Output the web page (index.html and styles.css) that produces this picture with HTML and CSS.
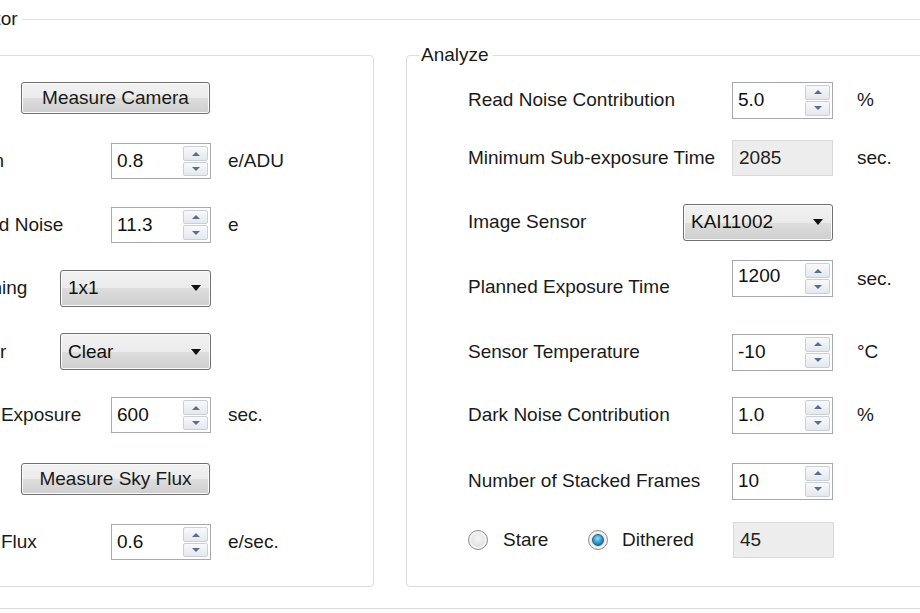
FILE: index.html
```html
<!DOCTYPE html>
<html lang="en">
  <head>
    <meta charset="UTF-8" />
    <title>Sub-exposure Calculator</title>
    <link rel="stylesheet" href="styles.css">
  </head>
  <body>
    <div class="window">
      <fieldset class="calc">
        <legend>Calculator</legend>
        <div class="panels">
          <!-- Camera -->
          <fieldset class="group camera">
            <legend>Camera</legend>
            <div class="rows">
              <div class="row">
                <button class="btn">Measure Camera</button>
              </div>
              <div class="row">
                <span class="lbl">Gain</span>
                <div class="spin"><span>0.8</span><span class="arrows"><i class="up"></i><i class="down"></i></span></div>
                <span class="unit">e/ADU</span>
              </div>
              <div class="row">
                <span class="lbl">Read Noise</span>
                <div class="spin"><span>11.3</span><span class="arrows"><i class="up"></i><i class="down"></i></span></div>
                <span class="unit">e</span>
              </div>
              <div class="row">
                <span class="lbl short">Binning</span>
                <div class="combo"><span>1x1</span></div>
              </div>
              <div class="row">
                <span class="lbl short">Filter</span>
                <div class="combo"><span>Clear</span></div>
              </div>
              <div class="row">
                <span class="lbl">Sky Exposure</span>
                <div class="spin"><span>600</span><span class="arrows"><i class="up"></i><i class="down"></i></span></div>
                <span class="unit">sec.</span>
              </div>
              <div class="row">
                <button class="btn">Measure Sky Flux</button>
              </div>
              <div class="row">
                <span class="lbl">Sky Flux</span>
                <div class="spin"><span>0.6</span><span class="arrows"><i class="up"></i><i class="down"></i></span></div>
                <span class="unit">e/sec.</span>
              </div>
            </div>
          </fieldset>

          <!-- Analyze -->
          <fieldset class="group analyze">
            <legend>Analyze</legend>
            <div class="rows">
              <div class="row">
                <span class="lbl">Read Noise Contribution</span>
                <div class="spin"><span>5.0</span><span class="arrows"><i class="up"></i><i class="down"></i></span></div>
                <span class="unit">%</span>
              </div>
              <div class="row">
                <span class="lbl">Minimum Sub-exposure Time</span>
                <div class="ro">2085</div>
                <span class="unit">sec.</span>
              </div>
              <div class="row">
                <span class="lbl short">Image Sensor</span>
                <div class="combo"><span>KAI11002</span></div>
              </div>
              <div class="row">
                <span class="lbl low">Planned Exposure Time</span>
                <div class="spin"><span class="high">1200</span><span class="arrows"><i class="up"></i><i class="down"></i></span></div>
                <span class="unit">sec.</span>
              </div>
              <div class="row">
                <span class="lbl">Sensor Temperature</span>
                <div class="spin"><span>-10</span><span class="arrows"><i class="up"></i><i class="down"></i></span></div>
                <span class="unit">°C</span>
              </div>
              <div class="row">
                <span class="lbl">Dark Noise Contribution</span>
                <div class="spin"><span>1.0</span><span class="arrows"><i class="up"></i><i class="down"></i></span></div>
                <span class="unit">%</span>
              </div>
              <div class="row">
                <span class="lbl">Number of Stacked Frames</span>
                <div class="spin"><span>10</span><span class="arrows"><i class="up"></i><i class="down"></i></span></div>
              </div>
              <div class="row">
                <label class="radio"><span class="dot"></span>Stare</label>
                <label class="radio checked"><span class="dot"></span>Dithered</label>
                <div class="ro">45</div>
              </div>
            </div>
          </fieldset>
        </div>
      </fieldset>
    </div>
  </body>
</html>
```

FILE: styles.css
```css
* {
  box-sizing: border-box;
}

html,
body {
  margin: 0;
  width: 920px;
  height: 613px;
  overflow: hidden;
  background: #fff;
}

body {
  font-family: 'Liberation Sans', Arial, sans-serif;
  font-size: 19px;
  color: #1a1a1a;
}

.window {
  margin-left: -100px;
  width: 1120px;
}

fieldset {
  margin: 0;
  padding: 0;
  min-width: 0;
  border: 1px solid #dcdcdc;
  border-radius: 4px;
}

legend {
  padding: 0 4px 0 2px;
  line-height: 22px;
}

.calc {
  margin-top: 8px;
  height: 601px;
}

.calc > legend {
  margin-left: 29px;
}

.panels {
  display: flex;
  gap: 32px;
  margin-top: 14px;
  padding-left: 4px;
}

.group {
  height: 543px;
}

.camera {
  width: 469px;
  padding-left: 58px;
}

/* legend sits in the content box, pull it back past the padding */
.camera > legend {
  margin-left: -54px;
}

.analyze {
  width: 600px;
  padding-left: 61px;
}

.analyze > legend {
  margin-left: -49px;
}

/* rows */
.row {
  display: flex;
  align-items: center;
}

.camera .row {
  height: 63.5px;
}

.analyze .rows {
  display: grid;
  grid-template-rows: 58px 64px 56.5px 73.5px 63px 66px 59px 38px;
  padding-top: 15px;
}

.analyze .row {
  height: 38px;
}

.lbl {
  white-space: nowrap;
}

.camera .lbl {
  width: 147px;
}

.camera .lbl.short {
  width: 96px;
}

.analyze .lbl {
  width: 264px;
}

.analyze .lbl.short {
  width: 215px;
}

.lbl.low {
  margin-top: 16px;
}

.unit {
  margin-left: 17px;
}

.analyze .unit {
  margin-left: 24px;
}

/* controls */
.btn {
  margin-left: 57px;
  width: 189px;
  height: 32px;
  padding: 0;
  font: inherit;
  color: #1a1a1a;
  border: 1px solid #707070;
  border-radius: 3px;
  background: linear-gradient(#f2f2f2 0%, #ebebeb 50%, #dddddd 50%, #cfcfcf 100%);
  box-shadow: inset 0 0 0 1px #fcfcfc;
}

.spin {
  display: flex;
  align-items: center;
  justify-content: space-between;
  width: 100px;
  height: 36px;
  padding: 2px 2px 2px 5px;
  border: 1px solid #a5a8ae;
  background: #fff;
  color: #111;
}

.analyze .spin {
  width: 101px;
  height: 37px;
}

.spin .high {
  margin-top: -6px;
}

.arrows {
  display: flex;
  flex-direction: column;
  gap: 1px;
  width: 25px;
  height: 100%;
}

.arrows i {
  flex: 1;
  display: flex;
  align-items: center;
  justify-content: center;
  border: 1px solid #c9d0d9;
  border-radius: 2px;
  background: linear-gradient(#f8f9fb, #e4e8ed);
}

.arrows i::after {
  content: '';
  border-left: 4px solid transparent;
  border-right: 4px solid transparent;
}

.arrows .up::after {
  border-bottom: 4px solid #5b6d8e;
}

.arrows .down::after {
  border-top: 4px solid #5b6d8e;
}

.combo {
  display: flex;
  align-items: center;
  justify-content: space-between;
  width: 151px;
  height: 37px;
  padding: 0 9px 0 7px;
  border: 1px solid #707070;
  border-radius: 3px;
  background: linear-gradient(#f2f2f2 0%, #ebebeb 50%, #dddddd 50%, #cfcfcf 100%);
  box-shadow: inset 0 0 0 1px #fbfbfb;
  color: #111;
}

.analyze .combo {
  width: 150px;
}

.combo::after {
  content: '';
  border-left: 5px solid transparent;
  border-right: 5px solid transparent;
  border-top: 6px solid #111;
}

.ro {
  display: flex;
  align-items: center;
  width: 101px;
  height: 36px;
  padding-left: 6px;
  background: #ededed;
  border: 1px solid #dadada;
  color: #222;
}

.radio {
  display: flex;
  align-items: center;
  gap: 15px;
  width: 120px;
}

.radio.checked {
  width: 145px;
  gap: 14px;
}

.dot {
  display: flex;
  align-items: center;
  justify-content: center;
  width: 20px;
  height: 20px;
  border-radius: 50%;
  border: 1px solid #8e8f8f;
  background: radial-gradient(circle at 50% 40%, #f6f6f6, #d4d4d4);
  box-shadow: inset 0 0 0 2px #f3f3f3;
}

.checked .dot::after {
  content: '';
  width: 10px;
  height: 10px;
  border-radius: 50%;
  border: 1px solid #1b5f86;
  background: radial-gradient(circle at 45% 35%, #8fe0f8, #2a93c4 55%, #0f577e);
}
```
